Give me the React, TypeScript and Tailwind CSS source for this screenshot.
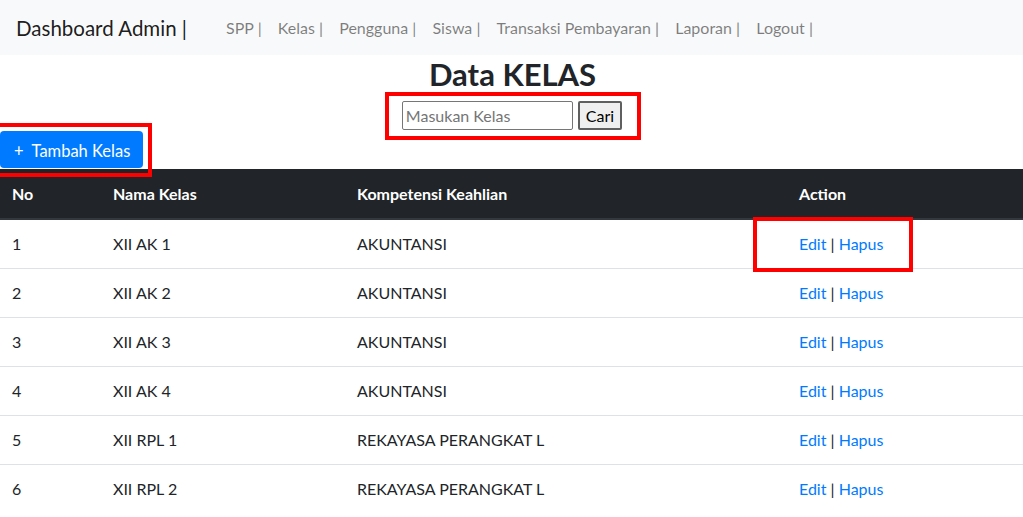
import React from "react";

const rows = [
  { no: 1, nama: "XII AK 1", komp: "AKUNTANSI" },
  { no: 2, nama: "XII AK 2", komp: "AKUNTANSI" },
  { no: 3, nama: "XII AK 3", komp: "AKUNTANSI" },
  { no: 4, nama: "XII AK 4", komp: "AKUNTANSI" },
  { no: 5, nama: "XII RPL 1", komp: "REKAYASA PERANGKAT L" },
  { no: 6, nama: "XII RPL 2", komp: "REKAYASA PERANGKAT L" },
];

const links = ["SPP", "Kelas", "Pengguna", "Siswa", "Transaksi Pembayaran", "Laporan", "Logout"];

export default function App() {
  return (
    <div
      className="relative w-[1023px] h-[517px] overflow-hidden bg-white text-[#212529]"
      style={{ fontFamily: 'Lato, "Open Sans", sans-serif' }}
    >
      <nav className="h-[55px] bg-[#f8f9fa] flex items-center pl-4">
        <span className="text-[20.5px] text-[rgba(0,0,0,0.9)] leading-[30px] mr-[31px]">Dashboard Admin |</span>
        <ul className="flex items-center">
          {links.map((l) => (
            <li key={l} className="px-[8.1px] text-[16px] leading-6 text-[rgba(0,0,0,0.5)] whitespace-pre">
              {l} |
            </li>
          ))}
        </ul>
      </nav>

      <h2 className="text-center text-[31px] font-bold leading-[38px] text-[#212529] pl-[2px]">Data KELAS</h2>

      <div className="flex justify-center mt-[8px] pl-[1px]">
        <div className="flex items-center gap-[5px]">
          <input
            className="w-[171px] h-[29px] border border-[#767676] rounded-[2px] px-[3px] text-[16px] placeholder:text-[#757575] outline-none"
            placeholder="Masukan Kelas"
          />
          <button className="h-[29px] px-[6px] border-2 border-[#5f5f5f] bg-[#efefef] rounded-[2px] text-[16px] text-black leading-none">
            Cari
          </button>
        </div>
      </div>

      <div className="mt-[1px]">
        <button className="h-[37px] w-[143px] bg-[#007bff] text-white text-[16.5px] rounded-[4px] flex items-center pl-[14px] pt-[3px] whitespace-pre">
          {"+  Tambah Kelas"}
        </button>
      </div>

      <table className="w-full border-collapse text-[16px] leading-6 mt-[1px]">
        <thead>
          <tr className="bg-[#212529] text-white h-[50px]">
            <th className="w-[101px] text-left font-bold px-3 border-b-2 border-[#32383e]">No</th>
            <th className="w-[244px] text-left font-bold px-3 border-b-2 border-[#32383e]">Nama Kelas</th>
            <th className="w-[442px] text-left font-bold px-3 border-b-2 border-[#32383e]">Kompetensi Keahlian</th>
            <th className="text-left font-bold px-3 border-b-2 border-[#32383e]">Action</th>
          </tr>
        </thead>
        <tbody>
          {rows.map((r) => (
            <tr key={r.no} className="border-t border-[#dee2e6] h-[49px]">
              <td className="px-3">{r.no}</td>
              <td className="px-3">{r.nama}</td>
              <td className="px-3">{r.komp}</td>
              <td className="px-3">
                <span className="text-[#007bff]">Edit</span> | <span className="text-[#007bff]">Hapus</span>
              </td>
            </tr>
          ))}
        </tbody>
      </table>

      <div className="absolute left-[385px] top-[92px] w-[256px] h-[48px] border-4 border-[#ff0000] pointer-events-none" />
      <div className="absolute left-[-10px] top-[123px] w-[162px] h-[54px] border-4 border-[#ff0000] pointer-events-none" />
      <div className="absolute left-[753px] top-[217px] w-[160px] h-[55px] border-4 border-[#ff0000] pointer-events-none" />
    </div>
  );
}
